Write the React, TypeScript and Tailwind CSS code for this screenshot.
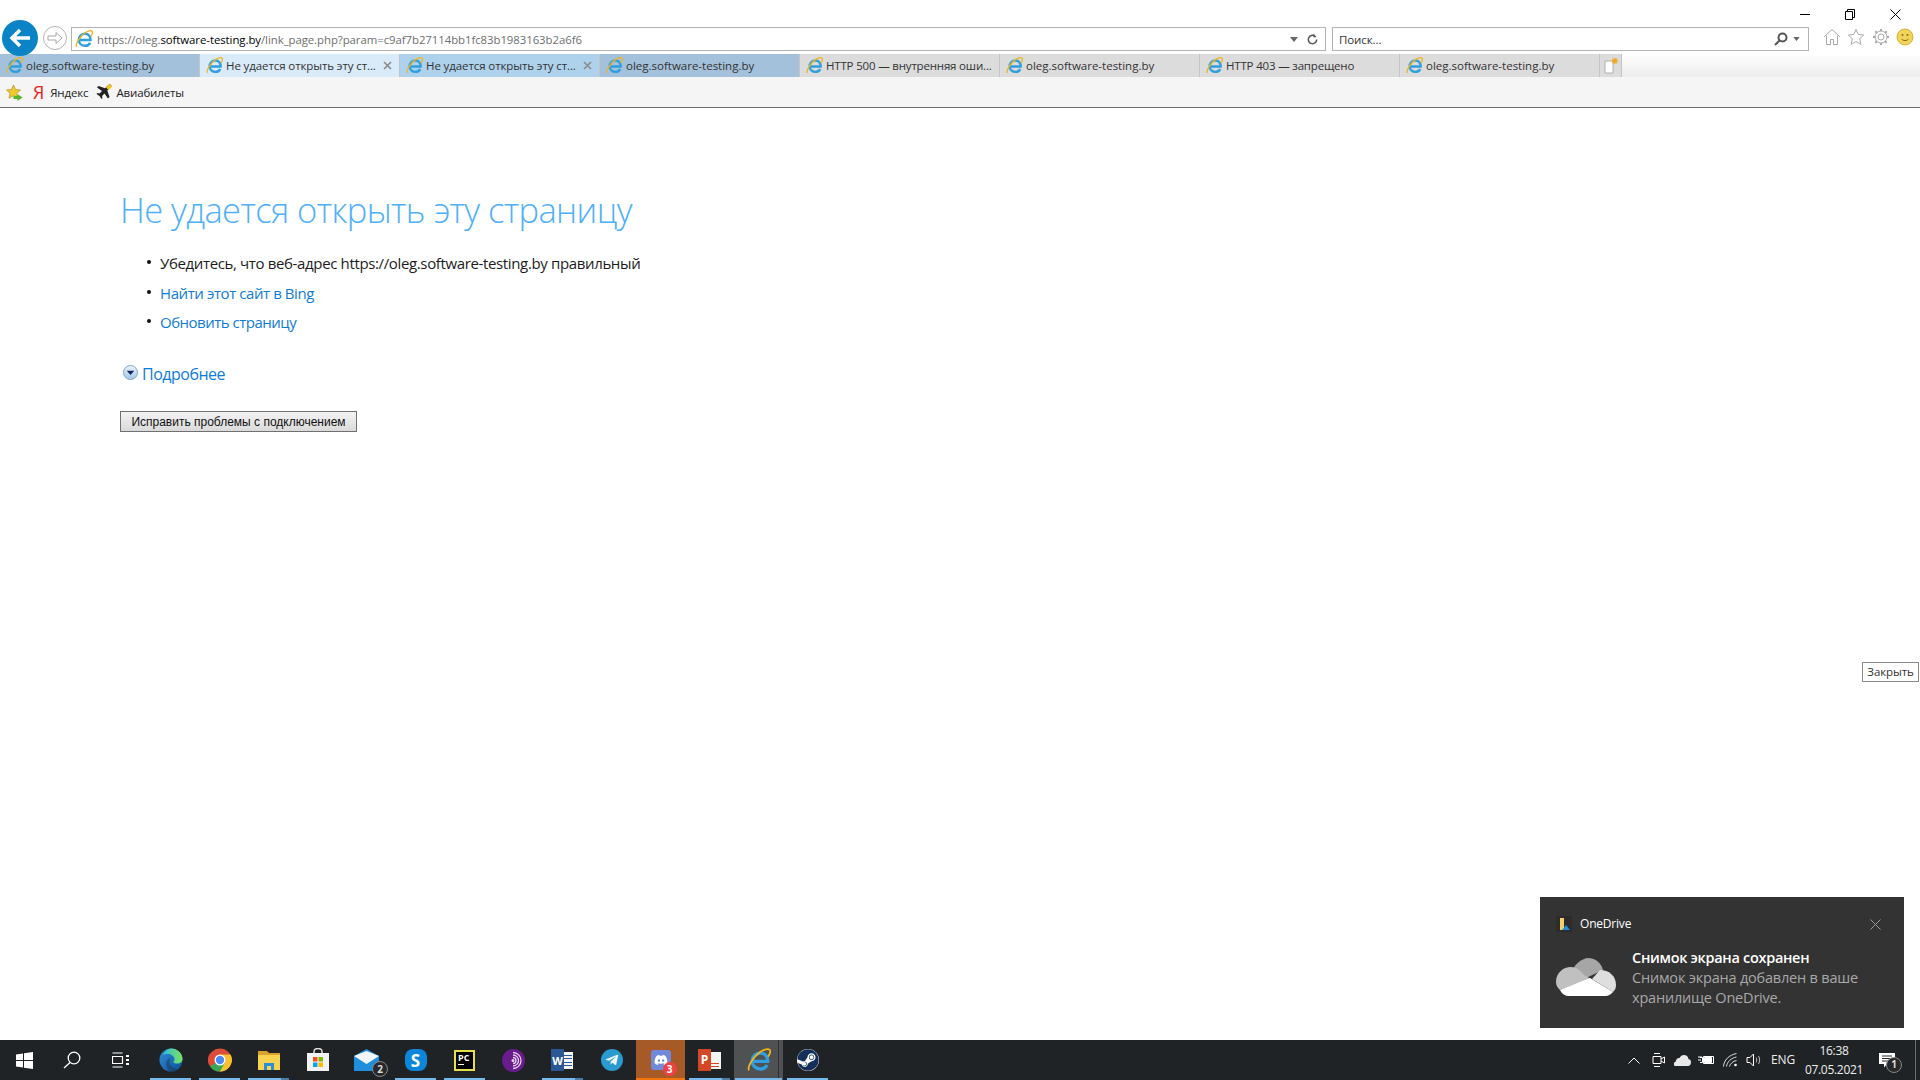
import React from "react";
import { FaSteam, FaDiscord, FaTelegramPlane } from "react-icons/fa";

const IE = ({ s = 16 }: { s?: number }) => (
  <svg width={s} height={s} viewBox="0 0 24 24" fill="none" className="shrink-0">
    <path d="M5 13.400h15.700c.3-5-3-8.400-7.200-8.400-4.500 0-8.300 3.500-8.300 8.200 0 4.600 3.700 7.800 8.300 7.800 3 0 5.300-1.300 6.600-3.900" stroke="#2f9fdf" strokeWidth="3.400" />
    <path d="M2.200 22.300C-.5 19.500 7 8 13.500 3.700c3.800-2.500 8-3.400 9.300-1.700 1 1.300-.2 4.400-1.800 6.700" stroke="#f0b41c" strokeWidth="1.800" />
  </svg>
);

const tabs = [
  { t: "oleg.software-testing.by", bg: "bg-[#a3c1da]", tr: "tracking-[0px]" },
  { t: "Не удается открыть эту ст...", bg: "bg-[#d9eaf9]", x: true, tr: "tracking-[-0.1px]" },
  { t: "Не удается открыть эту ст...", bg: "bg-[#aed1ec]", x: true, tr: "tracking-[-0.1px]" },
  { t: "oleg.software-testing.by", bg: "bg-[#a3c1da]", tr: "tracking-[0px]" },
  { t: "HTTP 500 — внутренняя оши...", bg: "bg-[#dcdcdc]", tr: "tracking-[-0.18px]" },
  { t: "oleg.software-testing.by", bg: "bg-[#dcdcdc]", tr: "tracking-[0px]" },
  { t: "HTTP 403 — запрещено", bg: "bg-[#dcdcdc]", tr: "tracking-[-0.18px]" },
  { t: "oleg.software-testing.by", bg: "bg-[#dcdcdc]", tr: "tracking-[0px]" },
];

const Under = ({ split }: { split?: boolean }) => (
  <div className="absolute bottom-0 left-[4px] right-[4px] h-[2px] bg-[#76b9ed] flex justify-end">
    {split && <div className="w-[8px] h-full bg-[#4b7ea6]" />}
  </div>
);

const Btn = ({ children, under, split, w = "w-[49px]", cls = "" }: any) => (
  <div className={`relative h-full flex items-center justify-center shrink-0 ${w} ${cls}`}>
    {children}
    {under && <Under split={split} />}
  </div>
);

const Badge = ({ n, cls }: { n: string; cls: string }) => (
  <div className={`absolute rounded-full flex items-center justify-center font-bold ${cls}`}>{n}</div>
);

export default function App() {
  return (
    <div className="w-[1920px] h-[1080px] flex flex-col relative overflow-hidden bg-white font-['Open_Sans',sans-serif]">
      {/* Browser chrome */}
      <header className="shrink-0 h-[108px] flex flex-col border-b border-[#6d6d6d]">
        <div className="h-[54px] flex items-start">
          <div className="ml-[2px] mt-[20px] w-[36px] h-[36px] shrink-0 rounded-full bg-[#0a84c6] flex items-center justify-center relative z-10">
            <svg width="22" height="20" viewBox="0 0 22 20" fill="none" stroke="#fff" strokeWidth="3.500">
              <path d="M11 2 3 10l8 8M3 10h18" />
            </svg>
          </div>
          <div className="ml-[5px] mt-[26px] w-[24px] h-[24px] shrink-0 rounded-full border border-[#b4b4b4] flex items-center justify-center">
            <svg width="16" height="14" viewBox="0 0 16 14" fill="none" stroke="#a8a8a8" strokeWidth="1">
              <path d="M1 5h8V1.500L15 7l-6 5.500V9H1z" />
            </svg>
          </div>
          <div className="ml-[4px] mt-[27px] w-[1255px] h-[24px] border border-[#b3b3b3] flex items-center pl-[3px] pr-[6px] shrink-0">
            <IE s={18} />
            <div className="ml-[4px] mt-[1px] text-[11.400px] tracking-[-0.06px] text-[#6e6e6e] whitespace-nowrap">
              https://oleg.<span className="text-black">software-testing.by</span>/link_page.php?param=c9af7b27114bb1fc83b1983163b2a6f6
            </div>
            <svg width="8" height="5" viewBox="0 0 8 5" className="ml-auto mr-[8px]"><path d="M0 0h8L4 5z" fill="#666" /></svg>
            <svg width="13" height="13" viewBox="0 0 14 14" fill="none" stroke="#555" strokeWidth="1.600">
              <path d="M11.500 7a4.500 4.500 0 1 1-2-3.700" /><path d="M8 .5v4h3.500" fill="#555" stroke="none" />
            </svg>
          </div>
          <div className="ml-[6px] mt-[27px] w-[477px] h-[24px] border border-[#b3b3b3] flex items-center pl-[6px] pr-[8px] shrink-0">
            <div className="text-[11.500px] mt-[1px] tracking-[-0.1px] text-[#333]">Поиск...</div>
            <svg width="14" height="14" viewBox="0 0 14 14" fill="none" className="ml-auto mr-[5px]" stroke="#555" strokeWidth="2">
              <circle cx="8.500" cy="5.500" r="4" /><path d="M5.500 8.500 1 13" />
            </svg>
            <svg width="7" height="4" viewBox="0 0 8 5"><path d="M0 0h8L4 5z" fill="#666" /></svg>
          </div>
          <div className="flex-1 min-w-0 h-full flex flex-col">
            <div className="h-[28px] flex items-center justify-end pr-[19px] gap-[35px]">
              <svg width="10" height="10" viewBox="0 0 10 10" stroke="#000" fill="none" className="shrink-0"><path d="M0 5.500h10" /></svg>
              <svg width="10" height="11" viewBox="0 0 10 11" stroke="#000" fill="none" className="shrink-0"><path d="M.5 2.500h7v8h-7zM2.500 2.500V.5h7v8h-2" /></svg>
              <svg width="11" height="11" viewBox="0 0 11 11" stroke="#000" fill="none" className="shrink-0"><path d="M.5.5l10 10M10.500.5l-10 10" /></svg>
            </div>
            <div className="flex items-center justify-end pr-[6px] gap-[6.500px]">
              <svg width="18" height="18" viewBox="0 0 18 18" fill="none" stroke="#a9a9a9"><path d="M1 9l8-7.500L17 9M3.500 7.500v9h4v-5h3v5h4v-9" /></svg>
              <svg width="18" height="18" viewBox="0 0 18 18" fill="none" stroke="#a9a9a9"><path d="M9 1.500l2.300 5 5.400.6-4 3.700 1.100 5.400L9 13.500l-4.800 2.700 1.100-5.400-4-3.700 5.400-.6z" /></svg>
              <svg width="18" height="18" viewBox="0 0 18 18" fill="none" stroke="#a9a9a9"><circle cx="9" cy="9" r="3" /><circle cx="9" cy="9" r="6" /><path d="M9 1v2M9 15v2M1 9h2M15 9h2M3.300 3.300l1.500 1.500M13.200 13.200l1.500 1.500M14.700 3.300l-1.500 1.500M4.800 13.200l-1.500 1.500" strokeWidth="2" /></svg>
              <svg width="18" height="18" viewBox="0 0 18 18"><circle cx="9" cy="9" r="8" fill="#f2d35a" stroke="#d8b338" /><circle cx="6.500" cy="7" r="1" fill="#8a6d12" /><circle cx="11.500" cy="7" r="1" fill="#8a6d12" /><path d="M5.500 11c1.500 2 5.500 2 7 0" stroke="#8a6d12" fill="none" /></svg>
            </div>
          </div>
        </div>
        <div className="h-[23px] flex bg-gradient-to-b from-white to-[#ececec]">
          {tabs.map((t, i) => (
            <div key={i} className={`w-[200px] shrink-0 h-full flex items-center pl-[6px] pr-[5px] border-r border-[#c4c4c4] text-[11.500px] text-[#333] ${t.bg} ${t.tr}`}>
              <IE s={17} />
              <span className="ml-[3px] mt-[1px] whitespace-nowrap">{t.t}</span>
              {t.x && <svg width="9" height="9" viewBox="0 0 9 9" className="ml-auto mr-[2px]" stroke="#8a8a8a" strokeWidth="1.600"><path d="M1 1l7 7M8 1l-7 7" /></svg>}
            </div>
          ))}
          <div className="w-[22px] h-full bg-[#dcdcdc] border-r border-[#c4c4c4] flex items-center justify-center">
            <svg width="16" height="17" viewBox="0 0 16 17"><path d="M2 4h8v12H2z" fill="#fff" stroke="#b0b0b0" /><path d="M12 0l.7 2 2-.7-.9 1.900 1.900.9-2 .7.7 2-1.900-.9-.9 1.900-.7-2-2 .7.900-1.900-1.900-.9 2-.7-.7-2 1.900.9z" fill="#f5a623" /></svg>
          </div>
        </div>
        <div className="flex-1 bg-[#f5f5f5] flex items-center pl-[6px] text-[11.500px] tracking-[-0.15px] text-[#222]">
          <svg width="17" height="17" viewBox="0 0 17 17"><path d="M7.500 1l2 4.500 5 .5-3.700 3.300 1 5L7.500 11.700 3 14.300l1-5L.5 6l5-.5z" fill="#f0c92f" stroke="#b38f1a" strokeWidth=".7" /><path d="M7.500 12h4V10l5 3.500-5 3.500v-2h-4z" fill="#58b52d" /></svg>
          <span className="ml-[10px] text-[#e5231b] text-[18px] leading-none font-normal">Я</span>
          <span className="ml-[6px] mt-[1px]">Яндекс</span>
          <svg width="16" height="16" viewBox="0 0 16 16" className="ml-[8px]"><path d="M15 1c-1-1-2.500-.3-3.500.7L9 4.200 2.500 2 1 3.500l5 3.500-2.500 2.500L1.500 9 .5 10l3 2 2 3 1-1-.5-2 2.500-2.500 3.500 5 1.500-1.500-2.200-6.500 2.500-2.500C15.300 3.500 16 2 15 1z" fill="#222" /><path d="M15 1c-1-1-2.500-.3-3.500.7L10 3.500 12.500 6 14.300 4.500C15.300 3.500 16 2 15 1z" fill="#f5c518" /></svg>
          <span className="ml-[4px] mt-[1px]">Авиабилеты</span>
        </div>
      </header>

      {/* Error page */}
      <main className="flex-1 pl-[120px] pt-[78px] min-h-0">
        <h1 className="text-[34.500px] leading-[48px] font-light tracking-[-0.6px] text-[#4fb0fa]">Не удается открыть эту страницу</h1>
        <ul className="mt-[19px] ml-[40px] text-[15px] leading-[20px] text-[#1c1c1c] tracking-[-0.36px] flex flex-col gap-[9.500px] list-none">
          {[
            <span>Убедитесь, что веб-адрес https://oleg.software-testing.by правильный</span>,
            <a className="text-[#0f7cd6] tracking-[-0.42px]">Найти этот сайт в Bing</a>,
            <a className="text-[#0f7cd6] tracking-[-0.5px]">Обновить страницу</a>,
          ].map((c, i) => (
            <li key={i} className="relative">
              <span className="absolute left-[-13px] top-[7px] w-[4px] h-[4px] rounded-full bg-[#111]" />
              {c}
            </li>
          ))}
        </ul>
        <div className="mt-[31px] flex items-center ml-[3px] text-[16px] leading-[22px] tracking-[-0.5px] text-[#0f7cd6]">
          <svg width="15" height="15" viewBox="0 0 15 15" className="-mt-[3px]"><defs><linearGradient id="dg" x1="0" y1="0" x2="0" y2="1"><stop offset="0" stopColor="#eef5fb" /><stop offset="1" stopColor="#9dc6e6" /></linearGradient></defs><circle cx="7.500" cy="7.500" r="7" fill="url(#dg)" stroke="#7da8c8" /><path d="M3.800 5.800h7.400L7.500 10z" fill="#16235c" /></svg>
          <span className="ml-[4px]">Подробнее</span>
        </div>
        <button className="mt-[26px] block w-[237px] h-[21px] border border-[#707070] bg-gradient-to-b from-[#f3f3f3] to-[#dadada] text-[12px] leading-none text-[#111] font-['Liberation_Sans',sans-serif]">
          Исправить проблемы с подключением
        </button>
      </main>

      <div className="absolute left-[1862px] top-[662px] w-[57px] h-[20px] bg-white border border-[#8a8a8a] flex items-center justify-center text-[11.500px] tracking-[-0.1px] text-[#333]">Закрыть</div>

      {/* OneDrive toast */}
      <div className="absolute left-[1540px] top-[897px] w-[364px] h-[131px] bg-[#333333] text-white">
        <div className="flex items-center pl-[16px] pt-[19px]">
          <div className="w-[16px] h-[16px] bg-[#2c2c2c] relative">
            <svg width="16" height="16" viewBox="0 0 16 16"><path d="M4 2h4v12H4z" fill="#f5cf6b" /><path d="M6 14l4-5 4 5z" fill="#1f8fe0" /></svg>
          </div>
          <span className="ml-[8px] text-[12px] leading-[16px] tracking-[-0.2px]">OneDrive</span>
          <svg width="11" height="11" viewBox="0 0 11 11" className="ml-[239px]" stroke="#9a9a9a"><path d="M.5.5l10 10M10.500.5l-10 10" /></svg>
        </div>
        <div className="flex pl-[16px] pt-[15px]">
          <svg width="60" height="40" viewBox="0 0 60 40" className="mt-[11px] shrink-0">
            <path d="M14 18C17 6 27 0 32 0c8 0 13 5 15 12L30 20z" fill="#a6a6a6" />
            <path d="M0 24C0 15 7 9 15 9c5 0 9 3 13 8l7 4L4 32C2 30 0 28 0 24z" fill="#c0c0c0" />
            <path d="M44 12c9 0 16 6 16 15 0 3-1 5-3 7L36 21z" fill="#dedede" />
            <path d="M4 32l30-12 23 14c-2 2-4 4-8 4H13c-4 0-7-2-9-6z" fill="#fff" />
          </svg>
          <div className="ml-[16px] mt-[1px] text-[14.500px] leading-[20px] tracking-[-0.2px]">
            <div className="font-semibold tracking-[-0.3px]">Снимок экрана сохранен</div>
            <div className="text-[#a9a9a9]">Снимок экрана добавлен в ваше<br />хранилище OneDrive.</div>
          </div>
        </div>
      </div>

      {/* Taskbar */}
      <footer className="shrink-0 h-[40px] bg-[#202325] flex items-stretch text-white">
        <Btn w="w-[48px]">
          <svg width="17" height="17" viewBox="0 0 17 17" fill="#fff"><path d="M0 2.500l7-1v6.500H0zM8 1.300L17 0v8H8zM0 9h7v6.500l-7-1zM8 9h9v8l-9-1.300z" /></svg>
        </Btn>
        <Btn w="w-[48px]">
          <svg width="18" height="18" viewBox="0 0 18 18" fill="none" stroke="#fff" strokeWidth="1.300"><circle cx="11" cy="7" r="5.800" /><path d="M7 11.500 1 17" /></svg>
        </Btn>
        <Btn w="w-[48px]">
          <svg width="17" height="16" viewBox="0 0 17 16" fill="none" stroke="#fff" strokeWidth="1.200"><path d="M.5 4.500h10v7H.5zM.5 1h10M.5 15h10" /><path d="M14 4h3M14 8h3M14 12h3" strokeWidth="2" /></svg>
        </Btn>
        <div className="w-[2px] shrink-0" />
        <Btn under>
          <svg width="24" height="24" viewBox="0 0 24 24"><defs><linearGradient id="eg" x1="0" y1="0" x2="1" y2="1"><stop offset="0" stopColor="#2f8fd8" /><stop offset="1" stopColor="#0c4f97" /></linearGradient><linearGradient id="eg2" x1="0" y1="0" x2="1" y2="0"><stop offset="0" stopColor="#2fbfd6" /><stop offset="1" stopColor="#79e35e" /></linearGradient></defs><circle cx="12" cy="12" r="11.500" fill="url(#eg)" /><path d="M4 7c2-4 5-6.500 8.500-6.500C18 .5 23.500 5 23.500 11c0 3-2.500 4.500-5 4.500-2 0-3.500-.5-4.500-1.500 1-.5 1.500-1.500 1.500-2.500C15.500 8 12 6 8.500 6 6.500 6 5 6.500 4 7z" fill="url(#eg2)" /><path d="M12 23.500c-3-1-5-4-5-7.500 0-3 2-5.500 5-6.500-1 1-1.500 2.500-1.500 4 0 4 4 7 8.500 7.500-2 1.500-4.500 2.500-7 2.500z" fill="#1f2326" opacity=".35" /></svg>
        </Btn>
        <Btn under>
          <svg width="24" height="24" viewBox="0 0 24 24"><circle cx="12" cy="12" r="11.500" fill="#dd4b39" /><path d="M12 12 2 18.500A11.500 11.500 0 0 0 12 23.500c4 0 6-1.500 8-4z" fill="#3aa757" /><path d="M12 6.500h10.500A11.500 11.500 0 0 1 12 23.500l5-9z" fill="#fbc02d" /><path d="M2 5.500A11.500 11.500 0 0 0 2 18.500l5-6.500z" fill="#dd4b39" /><circle cx="12" cy="12" r="5.500" fill="#fff" /><circle cx="12" cy="12" r="4.200" fill="#4c8bf5" /></svg>
        </Btn>
        <Btn under split>
          <svg width="24" height="21" viewBox="0 0 24 21"><path d="M1 1h9l2 2h11v17H1z" fill="#d9a22a" /><path d="M1 5h22v15H1z" fill="#f7d351" /><path d="M7 20v-7h10v7h-3v-4h-4v4z" fill="#2b8fd6" /></svg>
        </Btn>
        <Btn>
          <svg width="24" height="24" viewBox="0 0 24 24"><path d="M8 6V3.500C8 1.500 9.500 .5 12 .5s4 1 4 3V6" fill="none" stroke="#e0e0e0" strokeWidth="1.500" /><path d="M1 5h22v18H1z" fill="#f2f2f2" /><path d="M7 9h4.500v4.500H7z" fill="#f25022" /><path d="M12.500 9H17v4.500h-4.500z" fill="#7fba00" /><path d="M7 14.500h4.500V19H7z" fill="#00a4ef" /><path d="M12.500 14.500H17V19h-4.500z" fill="#ffb900" /></svg>
        </Btn>
        <Btn>
          <div className="relative">
            <svg width="25" height="22" viewBox="0 0 25 22"><path d="M0 7 12.500 0 25 7v15H0z" fill="#1f8fdc" /><path d="M0 7l12.500 8L25 7 12.500 2z" fill="#f2f6fa" /></svg>
            <Badge n="2" cls="-right-[9px] -bottom-[6px] w-[16px] h-[16px] bg-[#26282a] border border-[#888] text-[10px] text-[#ddd]" />
          </div>
        </Btn>
        <Btn under>
          <div className="w-[22px] h-[22px] rounded-[8px] bg-[#0b86d8] flex items-center justify-center text-[17px] font-bold leading-none">S</div>
        </Btn>
        <Btn under>
          <div className="w-[21px] h-[21px] bg-black border-[2px] border-[#e8e04a] flex flex-col pl-[2px] text-[9px] leading-[10px] font-bold pt-[1px]">
            PC
            <div className="w-[6px] h-[1px] bg-white mt-[1px]" />
          </div>
        </Btn>
        <Btn>
          <svg width="23" height="23" viewBox="0 0 23 23"><circle cx="11.500" cy="11.500" r="11.500" fill="#6a1b8e" /><g fill="none" stroke="#e6d3ee" strokeWidth="1.300"><path d="M11 3.500a8 8 0 0 1 0 16" /><path d="M11 6a5.500 5.500 0 0 1 0 11" /><path d="M11 8.500a3 3 0 0 1 0 6" /></g><circle cx="11" cy="11.500" r="1.500" fill="#e6d3ee" /></svg>
        </Btn>
        <Btn under split>
          <div className="relative w-[23px] h-[22px] flex items-center">
            <div className="absolute left-[7px] top-[3px] w-[15px] h-[17px] bg-[#f4f4f4] flex flex-col justify-around py-[2px] pl-[6px] pr-[1px]">
              <div className="h-[1px] bg-[#2b5797]" /><div className="h-[1px] bg-[#2b5797]" /><div className="h-[1px] bg-[#2b5797]" /><div className="h-[1px] bg-[#2b5797]" />
            </div>
            <div className="relative w-[13px] h-[22px] bg-[#2b5797] flex items-center justify-center text-[11px] font-bold leading-none">W</div>
          </div>
        </Btn>
        <Btn>
          <div className="w-[22px] h-[22px] rounded-full bg-[#2a9bd1] flex items-center justify-center">
            <FaTelegramPlane size={14} color="#f0f6fa" />
          </div>
        </Btn>
        <Btn cls="bg-[#a65a28]">
          <div className="relative">
            <div className="w-[20px] h-[20px] rounded-[3px] bg-[#7289da] flex items-center justify-center">
              <FaDiscord size={14} color="#fff" />
            </div>
            <Badge n="3" cls="-right-[6px] -bottom-[6px] w-[14px] h-[14px] bg-[#ed4245] text-[10px] text-white" />
          </div>
          <div className="absolute bottom-0 left-0 right-0 h-[2px] bg-[#f7730c]" />
        </Btn>
        <Btn under split>
          <div className="relative w-[23px] h-[22px] flex items-center">
            <div className="absolute left-[8px] top-[3px] w-[15px] h-[17px] bg-[#f4f4f4] flex flex-col justify-end gap-[2px] pb-[2px] px-[2px]">
              <div className="h-[1px] bg-[#d24726]" /><div className="h-[1px] bg-[#d24726]" />
            </div>
            <div className="relative w-[13px] h-[22px] bg-[#d24726] flex items-center justify-center text-[12px] font-bold leading-none">P</div>
          </div>
        </Btn>
        <Btn cls="bg-[#4f5153]">
          <IE s={24} />
          <div className="absolute right-[4px] top-0 bottom-0 w-[1px] bg-[#2f3133]" />
          <div className="absolute bottom-0 left-[1px] right-[1px] h-[2px] bg-[#76b9ed]" />
        </Btn>
        <Btn under>
          <div className="w-[22px] h-[22px] rounded-full bg-white flex items-center justify-center">
            <FaSteam size={22} color="#12305a" />
          </div>
        </Btn>

        {/* Tray */}
        <div className="ml-auto flex items-center pr-[12px] relative">
          <div className="w-[24px] flex justify-center">
            <svg width="12" height="7" viewBox="0 0 12 7" fill="none" stroke="#fff"><path d="M.5 6.500 6 1l5.500 5.500" /></svg>
          </div>
          <div className="w-[24px] flex justify-center">
            <svg width="13" height="16" viewBox="0 0 13 16" fill="none" stroke="#fff"><path d="M1 4.500h8v7H1zM9 7l3.500-2v6L9 9" /><path d="M2 1.500h6M2 14.500h6" /></svg>
          </div>
          <div className="w-[24px] flex justify-center">
            <svg width="17" height="11" viewBox="0 0 17 11" fill="#e8e8e8"><path d="M2 11a2 2 0 0 1-.5-4C2 4 4 2.500 5.500 3 6.500 1 8 0 10 0c2.500 0 4 1.500 4.500 4 1.500.3 2.500 1.500 2.500 3.200 0 2.300-1.200 3.800-3 3.800z" /></svg>
          </div>
          <div className="w-[24px] flex justify-center">
            <svg width="16" height="10" viewBox="0 0 16 10" fill="none" stroke="#fff"><path d="M5.500 1.500h10v7h-10z" /><path d="M6.500 2.500h7v5h-7z" fill="#fff" /><path d="M0 5h3M2 2.500h2.500v5H2M1 1v2M3 1v2" /></svg>
          </div>
          <div className="w-[25px] flex justify-center">
            <svg width="15" height="14" viewBox="0 0 15 14" fill="none" stroke="#ddd"><path d="M.5 13.500C1 7 6 2 13.500.5M3.500 13.500C4 9 8 5 13.500 4M6.500 13.500C7 11 10 8 13.500 7.500" /><circle cx="12.500" cy="12" r="1.300" fill="#fff" stroke="none" /></svg>
          </div>
          <div className="w-[21px] flex justify-center">
            <svg width="16" height="14" viewBox="0 0 16 14" fill="none" stroke="#fff"><path d="M1 4.500h3L7.500 1v12L4 9.500H1z" /><path d="M10 4.500c1 1.500 1 3.500 0 5M12.500 3c1.500 2.500 1.500 5.500 0 8" stroke="#bbb" /></svg>
          </div>
          <div className="w-[38px] text-center text-[12px] tracking-[-0.1px] text-[#eee]">ENG</div>
          <div className="w-[64px] text-center text-[12px] leading-[19px] tracking-[-0.3px] text-[#eee]">
            <div>16:38</div>
            <div>07.05.2021</div>
          </div>
          <div className="w-[42px] flex justify-center relative">
            <svg width="16" height="15" viewBox="0 0 16 15"><path d="M0 0h16v11H8l-3 3.500V11H0z" fill="#fff" /><path d="M3 3h10M3 5.500h10M3 8h7" stroke="#26282a" /></svg>
            <Badge n="1" cls="right-[6px] top-[4px] w-[16px] h-[16px] bg-[#26282a] border border-[#888] text-[10px] text-[#ddd]" />
          </div>
          <div className="absolute right-[4px] top-0 bottom-0 w-[1px] bg-[#6a6c6e]" />
        </div>
      </footer>
    </div>
  );
}
